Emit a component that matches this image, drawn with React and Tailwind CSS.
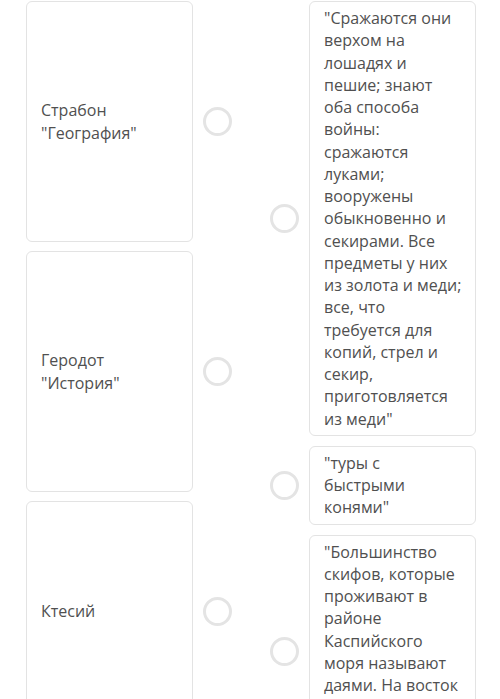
import React from "react";

const font = { fontFamily: '"Open Sans", "Noto Sans", sans-serif' };

function Circle() {
  return (
    <div className="w-[29px] h-[29px] shrink-0 rounded-full border-[3px] border-[#e4e4e4] bg-white" />
  );
}

function Lines({ lines }) {
  return (
    <div className="whitespace-nowrap">
      {lines.map((l, i) => (
        <div key={i}>{l}</div>
      ))}
    </div>
  );
}

const leftItems = [
  { h: "h-[241px]", lines: ["Страбон", "\"География\""] },
  { h: "h-[241px]", lines: ["Геродот", "\"История\""] },
  { h: "h-[220px]", lines: ["Ктесий"] },
];

const rightItems = [
  {
    h: "",
    lines: [
      "\"Сражаются они",
      "верхом на",
      "лошадях и",
      "пешие; знают",
      "оба способа",
      "войны:",
      "сражаются",
      "луками;",
      "вооружены",
      "обыкновенно и",
      "секирами. Все",
      "предметы у них",
      "из золота и меди;",
      "все, что",
      "требуется для",
      "копий, стрел и",
      "секир,",
      "приготовляется",
      "из меди\"",
    ],
  },
  { h: "", lines: ["\"туры с", "быстрыми", "конями\""] },
  {
    h: "h-[234px]",
    lines: [
      "\"Большинство",
      "скифов, которые",
      "проживают в",
      "районе",
      "Каспийского",
      "моря называют",
      "даями. На восток",
    ],
  },
];

export default function App() {
  return (
    <div
      className="w-[500px] h-[699px] overflow-hidden bg-white text-[16px] leading-[22.25px] text-[#505050]"
      style={font}
    >
      <div className="flex items-start pl-[26px] pt-[1px]">
        <div className="flex flex-col gap-[9px]">
          {leftItems.map((it, i) => (
            <div key={i} className="flex items-center gap-[10px]">
              <div
                className={`w-[167px] ${it.h} shrink-0 rounded-[6px] border border-[#e3e3e3] bg-white flex items-center px-[14px]`}
              >
                <Lines lines={it.lines} />
              </div>
              <Circle />
            </div>
          ))}
        </div>
        <div className="ml-[38px] flex flex-col gap-[10px]">
          {rightItems.map((it, i) => (
            <div key={i} className="flex items-center gap-[10px]">
              <Circle />
              <div
                className={`w-[167px] ${it.h} shrink-0 rounded-[6px] border border-[#e3e3e3] bg-white px-[14px] pt-[5px] pb-[5px]`}
              >
                <Lines lines={it.lines} />
              </div>
            </div>
          ))}
        </div>
      </div>
    </div>
  );
}
